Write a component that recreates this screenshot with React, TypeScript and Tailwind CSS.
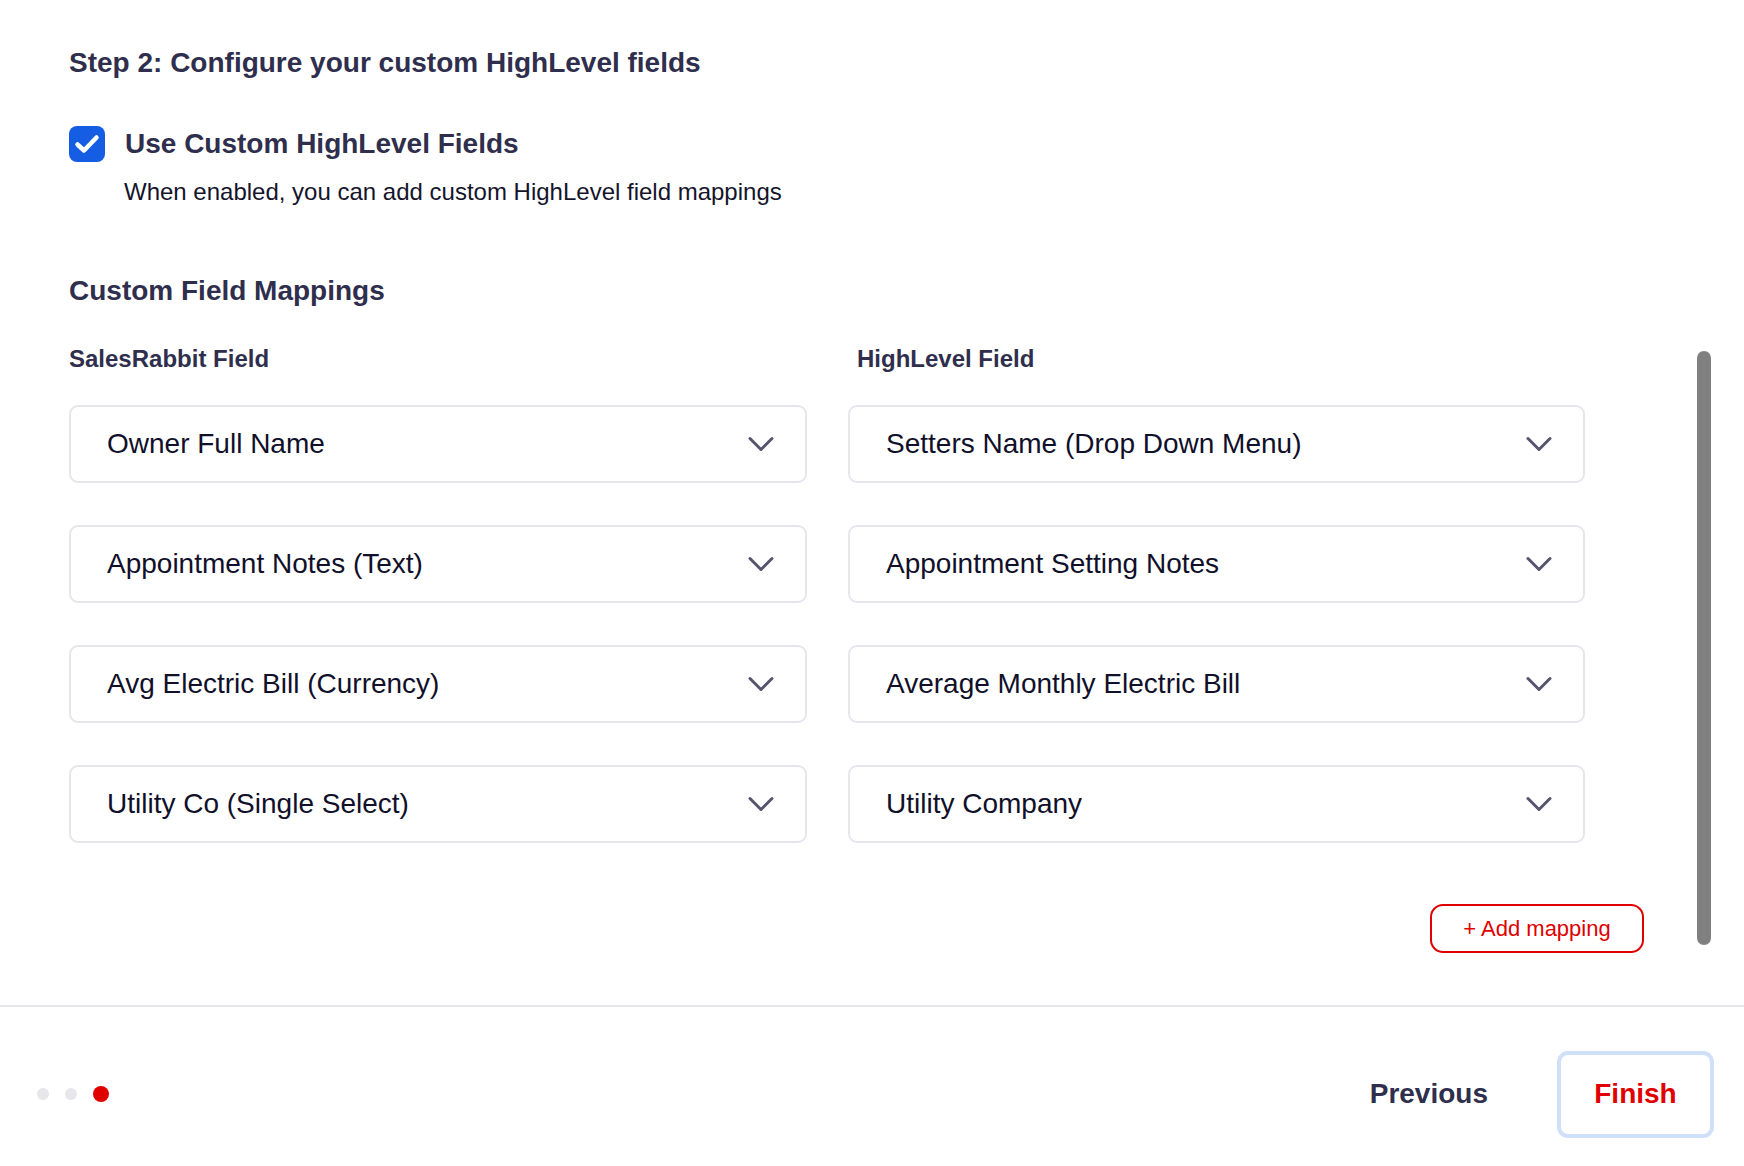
import React from 'react'

const mappings = [
  { left: 'Owner Full Name', right: 'Setters Name (Drop Down Menu)' },
  { left: 'Appointment Notes (Text)', right: 'Appointment Setting Notes' },
  { left: 'Avg Electric Bill (Currency)', right: 'Average Monthly Electric Bill' },
  { left: 'Utility Co (Single Select)', right: 'Utility Company' },
]

function Chevron() {
  return (
    <svg width="26" height="16" viewBox="0 0 26 16" fill="none" className="shrink-0">
      <path d="M2 2.5 13 13.5 24 2.5" stroke="#55556e" strokeWidth="3" strokeLinecap="round" strokeLinejoin="round" />
    </svg>
  )
}

function SelectBox({ value }: { value: string }) {
  return (
    <button className="h-[78px] w-full border-2 border-[#e6e6ee] rounded-[9px] bg-white pl-[36px] pr-[31px] flex items-center justify-between text-left">
      <span className="text-[28px] leading-[32px] text-[#10102a] truncate">{value}</span>
      <Chevron />
    </button>
  )
}

export default function App() {
  return (
    <div className="w-full h-screen bg-white flex flex-col font-['Liberation_Sans',Arial,sans-serif] overflow-hidden">
      {/* Scrollable step content */}
      <div className="h-[1005px] flex shrink-0">
        <div className="flex-1 pl-[69px] pt-[47px]">
          <h2 className="text-[28px] leading-[32px] font-bold text-[#2f2f4d]">
            Step 2: Configure your custom HighLevel fields
          </h2>

          {/* Toggle */}
          <div className="mt-[47px] flex items-center gap-[20px]">
            <div className="w-[36px] h-[36px] rounded-[8px] bg-[#155ee4] flex items-center justify-center">
              <svg width="26" height="22" viewBox="0 0 26 22" fill="none">
                <path d="M3.5 11.5 10 17.5 22.5 4.5" stroke="white" strokeWidth="4.5" strokeLinecap="round" strokeLinejoin="round" />
              </svg>
            </div>
            <span className="text-[28px] leading-[32px] font-bold text-[#2f2f4d]">Use Custom HighLevel Fields</span>
          </div>
          <p className="mt-[16px] ml-[55px] text-[24px] leading-[28px] text-[#14142b]">
            When enabled, you can add custom HighLevel field mappings
          </p>

          {/* Mappings */}
          <h3 className="mt-[69px] text-[28px] leading-[32px] font-bold text-[#2f2f4d]">Custom Field Mappings</h3>

          <div className="w-[1575px]">
            <div className="w-[1516px] mt-[38px] grid grid-cols-[738px_737px] gap-x-[41px]">
              <div className="text-[24px] leading-[28px] font-bold text-[#2f2f4d]">SalesRabbit Field</div>
              <div className="ml-[9px] text-[24px] leading-[28px] font-bold text-[#2f2f4d]">HighLevel Field</div>
            </div>
            <div className="w-[1516px] mt-[32px] grid grid-cols-[738px_737px] gap-x-[41px] gap-y-[42px]">
              {mappings.map((m) => (
                <React.Fragment key={m.left}>
                  <SelectBox value={m.left} />
                  <SelectBox value={m.right} />
                </React.Fragment>
              ))}
            </div>
            <div className="mt-[61px] flex justify-end">
              <button className="h-[49px] w-[214px] border-2 border-[#e00000] rounded-[13px] text-[22px] leading-[26px] text-[#e00000] flex items-center justify-center">
                + Add mapping
              </button>
            </div>
          </div>
        </div>

        {/* Scrollbar */}
        <div className="w-[14px] mr-[33px] pt-[351px]">
          <div className="h-[594px] w-full rounded-full bg-[#808080]" />
        </div>
      </div>

      {/* Footer */}
      <div className="flex-1 border-t-2 border-[#e6e6ec] pl-[37px] pr-[30px] pt-[43px] pb-[28px] flex items-center justify-between">
        <div className="flex items-center gap-[16px]">
          <span className="w-[12px] h-[12px] rounded-full bg-[#e6e6eb]" />
          <span className="w-[12px] h-[12px] rounded-full bg-[#e6e6eb]" />
          <span className="w-[16px] h-[16px] rounded-full bg-[#e00000]" />
        </div>
        <div className="flex items-center gap-[69px]">
          <button className="text-[28px] leading-[32px] font-bold text-[#2f2f4d]">Previous</button>
          <button className="w-[157px] h-[87px] border-4 border-[#cfe0f8] rounded-[11px] text-[28px] leading-[32px] font-bold text-[#e00000]">
            Finish
          </button>
        </div>
      </div>
    </div>
  )
}
